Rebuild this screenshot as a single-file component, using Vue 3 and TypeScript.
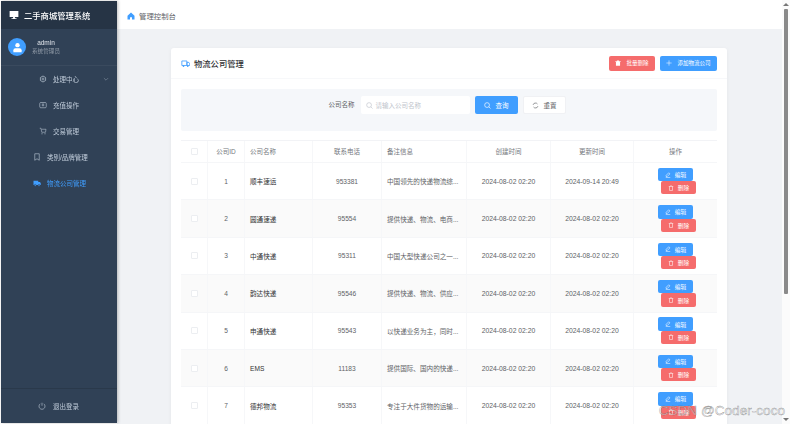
<script setup lang="ts">
interface Row { id: number; name: string; phone: string; note: string; created: string; updated: string }
const d = '2024-08-02 02:20'
const rows: Row[] = [
  { id: 1, name: '顺丰速运', phone: '953381', note: '中国领先的快递物流综...', created: d, updated: '2024-09-14 20:49' },
  { id: 2, name: '圆通速递', phone: '95554', note: '提供快递、物流、电商...', created: d, updated: d },
  { id: 3, name: '中通快递', phone: '95311', note: '中国大型快递公司之一...', created: d, updated: d },
  { id: 4, name: '韵达快递', phone: '95546', note: '提供快递、物流、供应...', created: d, updated: d },
  { id: 5, name: '申通快递', phone: '95543', note: '以快递业务为主，同时...', created: d, updated: d },
  { id: 6, name: 'EMS', phone: '11183', note: '提供国际、国内的快递...', created: d, updated: d },
  { id: 7, name: '德邦物流', phone: '95353', note: '专注于大件货物的运输...', created: d, updated: d },
]
</script>

<template>
  <div class="app">
    <aside class="side">
      <div class="brand">
        <svg class="brand-ico" viewBox="0 0 16 16"><path d="M1 1.500h14v9.500H1zM6.500 11h3v2h2.500v1.200H4V13h2.500z" fill="#fff"/></svg>
        <span>二手商城管理系统</span>
      </div>
      <div class="user">
        <div class="avatar">
          <svg viewBox="0 0 16 16" width="11" height="11"><circle cx="8" cy="4.600" r="3.200" fill="#fff"/><path d="M2 15v-3a3 3 0 0 1 3-3h6a3 3 0 0 1 3 3v3z" fill="#fff"/></svg>
        </div>
        <div class="user-text"><div class="uname">admin</div><div class="urole">系统管理员</div></div>
      </div>
      <nav class="menu">
        <div class="item sub">
          <svg viewBox="0 0 16 16" class="ico"><path d="M8 2l5.200 3v6L8 14l-5.200-3V5z" fill="none" stroke="currentColor" stroke-width="1.400"/><circle cx="8" cy="8" r="2" fill="none" stroke="currentColor" stroke-width="1.200"/></svg>
          <span>处理中心</span>
          <svg class="chev" viewBox="0 0 10 10"><path d="M1.500 3.500L5 7l3.500-3.500" fill="none" stroke="currentColor"/></svg>
        </div>
        <div class="item sub">
          <svg viewBox="0 0 16 16" class="ico"><rect x="1.500" y="3" width="13" height="10.500" rx="2" fill="none" stroke="currentColor" stroke-width="1.200"/><path d="M5.500 6h5M5.500 8.500h5M8 6v5" stroke="currentColor" fill="none"/></svg>
          <span>充值操作</span>
        </div>
        <div class="item sub">
          <svg viewBox="0 0 16 16" class="ico"><path d="M1.500 2.500h2.500l1.500 8h7.500l1-6H5" fill="none" stroke="currentColor" stroke-width="1.100"/><circle cx="6" cy="13.300" r="1" fill="currentColor"/><circle cx="12" cy="13.300" r="1" fill="currentColor"/></svg>
          <span>交易管理</span>
        </div>
        <div class="item top">
          <svg viewBox="0 0 16 16" class="ico"><path d="M3.500 1.500h9v13L8 11.500l-4.500 3z" fill="none" stroke="currentColor" stroke-width="1.200"/></svg>
          <span>类别/品牌管理</span>
        </div>
        <div class="item top active">
          <svg viewBox="0 0 16 16" class="ico"><path d="M1 3.500h9.500v8.500H1zM10.500 6H14l1.500 2.500V12h-5z" fill="currentColor"/><circle cx="4.500" cy="12.500" r="1.800" fill="currentColor" stroke="#304156"/><circle cx="12" cy="12.500" r="1.800" fill="currentColor" stroke="#304156"/></svg>
          <span>物流公司管理</span>
        </div>
      </nav>
      <div class="logout">
        <svg viewBox="0 0 16 16" class="ico"><path d="M4.600 3.600a6 6 0 1 0 6.800 0M8 1.500v6" fill="none" stroke="currentColor" stroke-width="1.200"/></svg>
        <span>退出登录</span>
      </div>
    </aside>

    <div class="main">
      <header class="bar">
        <svg viewBox="0 0 16 16" width="8" height="8"><path d="M8 1L1 7.500V15h5v-4.500h4V15h5V7.500z" fill="#409eff"/></svg>
        <span>管理控制台</span>
      </header>
      <div class="content">
        <section class="card">
          <div class="card-head">
            <div class="title">
              <svg viewBox="0 0 16 16" width="9" height="9"><path d="M1.500 3.500h9v8h-9zM10.500 6H14l1.500 2.500V11.500h-5z" fill="none" stroke="#409eff" stroke-width="1.500"/><circle cx="4.500" cy="12.500" r="1.500" fill="#409eff"/><circle cx="12" cy="12.500" r="1.500" fill="#409eff"/></svg>
              <span>物流公司管理</span>
            </div>
            <div class="head-actions">
              <button class="btn big red">
                <svg viewBox="0 0 16 16" width="6" height="6"><path d="M1 3h14v2H1zM5 1h6v2H5zM2.500 5.500h11V15h-11z" fill="#fff"/></svg>
                <span>批量删除</span>
              </button>
              <button class="btn big blue">
                <svg viewBox="0 0 16 16" width="6" height="6"><path d="M8 1v14M1 8h14" stroke="#fff" stroke-width="1.400"/></svg>
                <span>添加物流公司</span>
              </button>
            </div>
          </div>

          <div class="search">
            <label>公司名称</label>
            <div class="input">
              <svg viewBox="0 0 16 16" width="7" height="7"><circle cx="7" cy="7" r="5.500" fill="none" stroke="#c0c4cc" stroke-width="1.500"/><path d="M11 11l4 4" stroke="#c0c4cc" stroke-width="1.500"/></svg>
              <span>请输入公司名称</span>
            </div>
            <button class="btn query">
              <svg viewBox="0 0 16 16" width="7" height="7"><circle cx="7" cy="7" r="5.500" fill="none" stroke="#fff" stroke-width="1.500"/><path d="M11 11l4 4" stroke="#fff" stroke-width="1.500"/></svg>
              <span>查询</span>
            </button>
            <button class="btn reset">
              <svg viewBox="0 0 16 16" width="7" height="7"><path d="M2.500 6.500a5.700 5.700 0 0 1 10-2M13.500 9.500a5.700 5.700 0 0 1-10 2" fill="none" stroke="#606266" stroke-width="1.500"/></svg>
              <span>重置</span>
            </button>
          </div>

          <div class="table">
            <div class="tr thead">
              <div class="c c-check"><i class="box"></i></div>
              <div class="c c-id">公司ID</div>
              <div class="c c-name">公司名称</div>
              <div class="c c-phone">联系电话</div>
              <div class="c c-note">备注信息</div>
              <div class="c c-created">创建时间</div>
              <div class="c c-updated">更新时间</div>
              <div class="c c-op">操作</div>
            </div>
            <div v-for="(r, i) in rows" :key="r.id" class="tr row" :class="{ stripe: i % 2 === 1 }">
              <div class="c c-check"><i class="box"></i></div>
              <div class="c c-id">{{ r.id }}</div>
              <div class="c c-name strong">{{ r.name }}</div>
              <div class="c c-phone">{{ r.phone }}</div>
              <div class="c c-note">{{ r.note }}</div>
              <div class="c c-created">{{ r.created }}</div>
              <div class="c c-updated">{{ r.updated }}</div>
              <div class="c c-op ops">
                <button class="btn mini blue">
                  <svg viewBox="0 0 16 16" width="6" height="6"><path d="M10 2l3 3-7 7H3v-3zM2 15h12" fill="none" stroke="#fff" stroke-width="1.500"/></svg>
                  <span>编辑</span>
                </button>
                <button class="btn mini red second">
                  <svg viewBox="0 0 16 16" width="6" height="6"><path d="M2 4h12M6 2h4M4 4v10.500h8V4" fill="none" stroke="#fff" stroke-width="1.400"/></svg>
                  <span>删除</span>
                </button>
              </div>
            </div>
          </div>
        </section>
      </div>
    </div>
    <div class="gutter">
      <i class="arrow up"></i>
      <div class="thumb"></div>
      <i class="arrow down"></i>
    </div>
    <div class="mark">CSDN @Coder-coco</div>
  </div>
</template>

<style>
html, body { margin: 0; overflow: hidden; background: #fff; }
</style>

<style scoped>
.app { position: relative; display: flex; height: 424px; width: 790px; overflow: hidden; font-family: "Liberation Sans", "Noto Sans CJK SC", sans-serif; font-size: 7px; color: #606266; filter: blur(0.3px); }
.side { width: 116px; flex: none; margin: 1px 0 1px 1px; display: flex; flex-direction: column; background: #304156; color: #bfcbd9; box-shadow: 1px 0 3px rgba(0,0,0,.25); z-index: 2; }
.brand { height: 28px; flex: none; display: flex; align-items: center; gap: 5px; padding-left: 8px; background: #263445; color: #fff; font-size: 8.300px; font-weight: 500; }
.brand-ico { width: 10px; height: 10px; }
.user { height: 37px; flex: none; box-sizing: border-box; display: flex; align-items: center; gap: 6px; padding-left: 7px; border-bottom: 1px solid rgba(255,255,255,.05); }
.avatar { width: 18px; height: 18px; border-radius: 50%; background: #409eff; display: flex; align-items: center; justify-content: center; }
.user-text { text-align: center; }
.uname { font-size: 6.500px; color: #dfe4ea; line-height: 9px; }
.urole { font-size: 5.600px; color: #909aa7; line-height: 9px; }
.menu { flex: 1; }
.item { height: 26px; display: flex; align-items: center; gap: 6px; font-size: 6.500px; position: relative; }
.sub { padding-left: 38px; }
.top { padding-left: 32px; }
.active { color: #409eff; }
.ico { width: 8px; height: 8px; flex: none; }
.chev { position: absolute; right: 8px; top: 10px; width: 6px; height: 6px; opacity: .6; }
.logout { height: 35px; flex: none; box-sizing: border-box; border-top: 1px solid rgba(0,0,0,.12); display: flex; align-items: center; padding-left: 37px; gap: 7px; font-size: 6.500px; }
.main { width: 665px; flex: none; display: flex; flex-direction: column; min-width: 0; background: #f0f2f5; }
.bar { height: 29px; flex: none; display: flex; align-items: center; gap: 4px; padding-left: 10px; background: #fff; color: #606266; font-size: 7.400px; box-sizing: border-box; padding-top: 2px; }
.content { flex: 1; min-height: 0; padding: 19px 55px 0 54px; overflow: hidden; }
.card { background: #fff; border-radius: 3px; padding: 0 10px; box-shadow: 0 1px 4px rgba(0,0,0,.05); height: 400px; box-sizing: border-box; }
.card-head { height: 31px; display: flex; justify-content: space-between; align-items: center; border-bottom: 1px solid #f7f8fa; margin: 0 -10px 10px; padding: 0 10px; box-sizing: border-box; }
.title { display: flex; align-items: center; gap: 4px; font-size: 8.300px; font-weight: 500; color: #303133; }
.head-actions { display: flex; gap: 5px; }
.btn { border: 0; font: inherit; display: inline-flex; align-items: center; justify-content: center; box-sizing: border-box; border-radius: 2px; padding: 0; margin: 0; color: #fff; }
.blue { background: #409eff; }
.red { background: #f56c6c; }
.big { height: 15px; gap: 5px; font-size: 5.500px; }
.big.red { width: 46px; }
.big.blue { width: 57px; }
.search { height: 42px; background: #f5f7fa; border-radius: 2px; margin-bottom: 9px; display: flex; justify-content: center; gap: 5px; padding: 7px 4px 0 0; box-sizing: border-box; color: #606266; font-size: 6.500px; }
.search label { height: 18px; line-height: 18px; margin-right: 1px; }
.input { width: 109px; height: 18px; background: #fff; border-radius: 2px; display: flex; align-items: center; gap: 3px; padding-left: 5px; box-sizing: border-box; color: #c0c4cc; }
.query { width: 43px; height: 18px; gap: 5px; background: #409eff; font-size: 6.500px; }
.reset { width: 43px; height: 18px; gap: 5px; background: #fff; color: #606266; font-size: 6.500px; border: 1px solid #f0f1f4; }
.table { border-top: 1px solid #f2f3f6; }
.tr { display: flex; border-bottom: 1px solid #f5f6f8; box-sizing: border-box; }
.thead { height: 22px; color: #75787e; font-size: 6.500px; }
.thead .c { padding-bottom: 1px; }
.row { height: 37.400px; font-size: 6.600px; color: #606266; }
.stripe { background: #fafafa; }
.c { display: flex; align-items: center; justify-content: center; box-sizing: border-box; border-right: 1px solid #f6f7f9; white-space: nowrap; overflow: hidden; }
.c-check { width: 27px; }
.c-id { width: 37px; }
.c-name { width: 68px; justify-content: flex-start; padding-left: 5px; }
.c-phone { width: 69px; }
.c-note { width: 85px; justify-content: flex-start; padding-left: 5px; }
.c-created { width: 84px; }
.c-updated { width: 83px; }
.c-op { width: 83px; border-right: 0; }
.row .c-created, .row .c-updated { font-size: 6.800px; }
.strong { color: #303133; }
.box { width: 7px; height: 7px; border: 1px solid #eceef1; border-radius: 1px; background: #fff; box-sizing: border-box; display: block; }
.ops { flex-direction: column; align-items: flex-start; padding-left: 24px; }
.mini { width: 35px; height: 13.300px; gap: 4px; font-size: 5.700px; flex: none; }
.second { margin-left: 3px; }
.gutter { flex: 1; background: #fbfbfb; display: flex; flex-direction: column; align-items: center; padding: 3px 0 3px; box-sizing: border-box; z-index: 1; }
.thumb { width: 4px; height: 285px; margin-top: 3px; background: #8a8a8a; border-radius: 1px; }
.arrow { display: block; width: 0; height: 0; border-left: 3px solid transparent; border-right: 3px solid transparent; }
.up { border-bottom: 3px solid #777; }
.down { border-top: 3px solid #777; margin-top: auto; }
.mark { position: absolute; right: 5px; bottom: 6px; font-family: "Liberation Sans", sans-serif; font-size: 13.600px; color: rgba(255,255,255,.45); -webkit-text-stroke: 0.4px rgba(90,90,90,.7); z-index: 3; pointer-events: none; }
</style>
